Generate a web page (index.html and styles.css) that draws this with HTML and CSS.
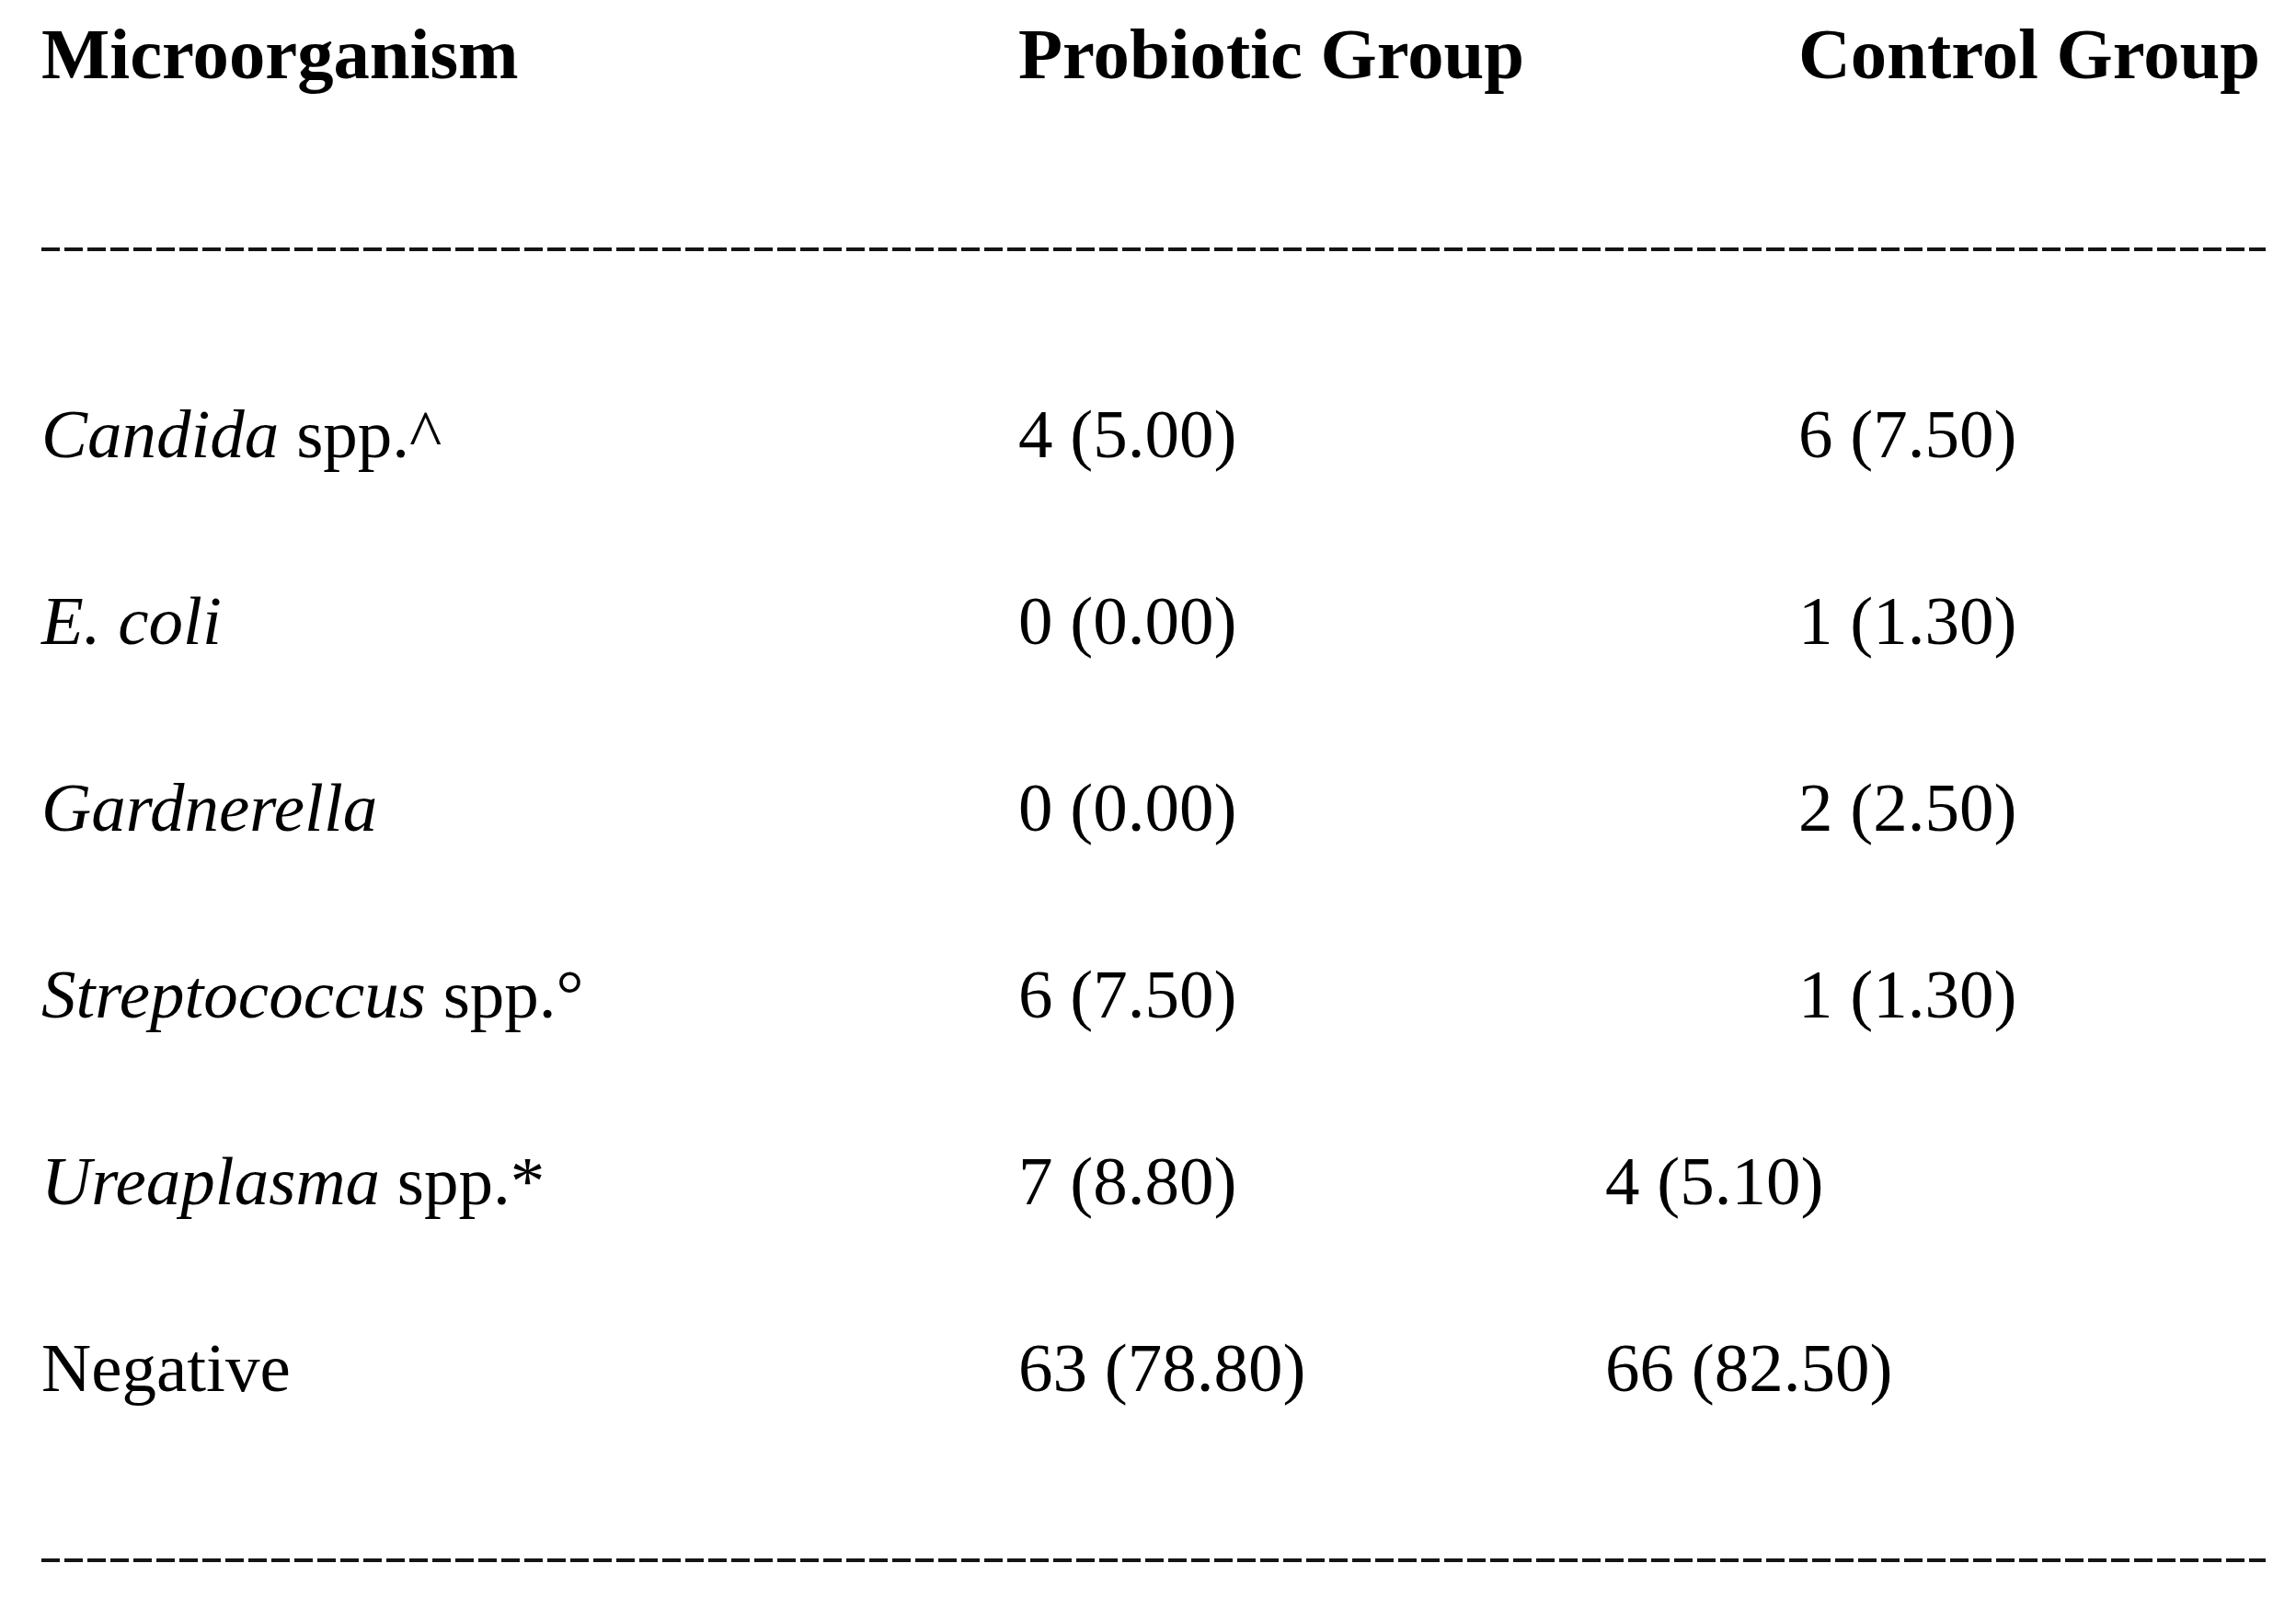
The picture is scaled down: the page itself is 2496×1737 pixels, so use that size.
FILE: index.html
```html
<!DOCTYPE html>
<html lang="en">
<head>
<meta charset="utf-8">
<title>Microorganism table</title>
<link rel="stylesheet" href="styles.css">
</head>
<body>
<div class="sheet">
  <div class="table-head">
    <div class="cell">Microorganism</div>
    <div class="cell">Probiotic Group</div>
    <div class="cell shifted">Control Group</div>
  </div>
  <div class="rule rule-top"></div>
  <div class="table-body">
    <div class="cell"><i>Candida</i> spp.^</div>
    <div class="cell">4 (5.00)</div>
    <div class="cell shifted">6 (7.50)</div>

    <div class="cell"><i>E. coli</i></div>
    <div class="cell">0 (0.00)</div>
    <div class="cell shifted">1 (1.30)</div>

    <div class="cell"><i>Gardnerella</i></div>
    <div class="cell">0 (0.00)</div>
    <div class="cell shifted">2 (2.50)</div>

    <div class="cell"><i>Streptococcus</i> spp.°</div>
    <div class="cell">6 (7.50)</div>
    <div class="cell shifted">1 (1.30)</div>

    <div class="cell"><i>Ureaplasma</i> spp.*</div>
    <div class="cell">7 (8.80)</div>
    <div class="cell">4 (5.10)</div>

    <div class="cell">Negative</div>
    <div class="cell">63 (78.80)</div>
    <div class="cell">66 (82.50)</div>
  </div>
  <div class="rule rule-bottom"></div>
</div>
</body>
</html>
```

FILE: styles.css
```css
html, body {
  margin: 0;
  padding: 0;
  background: #ffffff;
}

body {
  font-family: "Liberation Serif", "Times New Roman", serif;
  color: #000000;
}

.sheet {
  width: 2418px;
  padding: 15px 0 0 45px;
}

.table-head,
.table-body {
  display: grid;
  grid-template-columns: 1062px 638px 1fr;
}

.table-head {
  font-weight: bold;
  font-size: 78.7px;
  line-height: 88px;
}

.table-body {
  font-size: 75px;
  line-height: 90px;
  row-gap: 113px;
  margin-top: 154px;
}

.cell {
  white-space: nowrap;
}

.cell i {
  font-style: italic;
}

.shifted {
  padding-left: 210px;
}

.rule {
  height: 4px;
  width: 2418px;
  background: repeating-linear-gradient(to right, #151515 0 20px, transparent 20px 25px);
}

.rule-top {
  margin-top: 166px;
}

.rule-bottom {
  margin-top: 162px;
}
```
